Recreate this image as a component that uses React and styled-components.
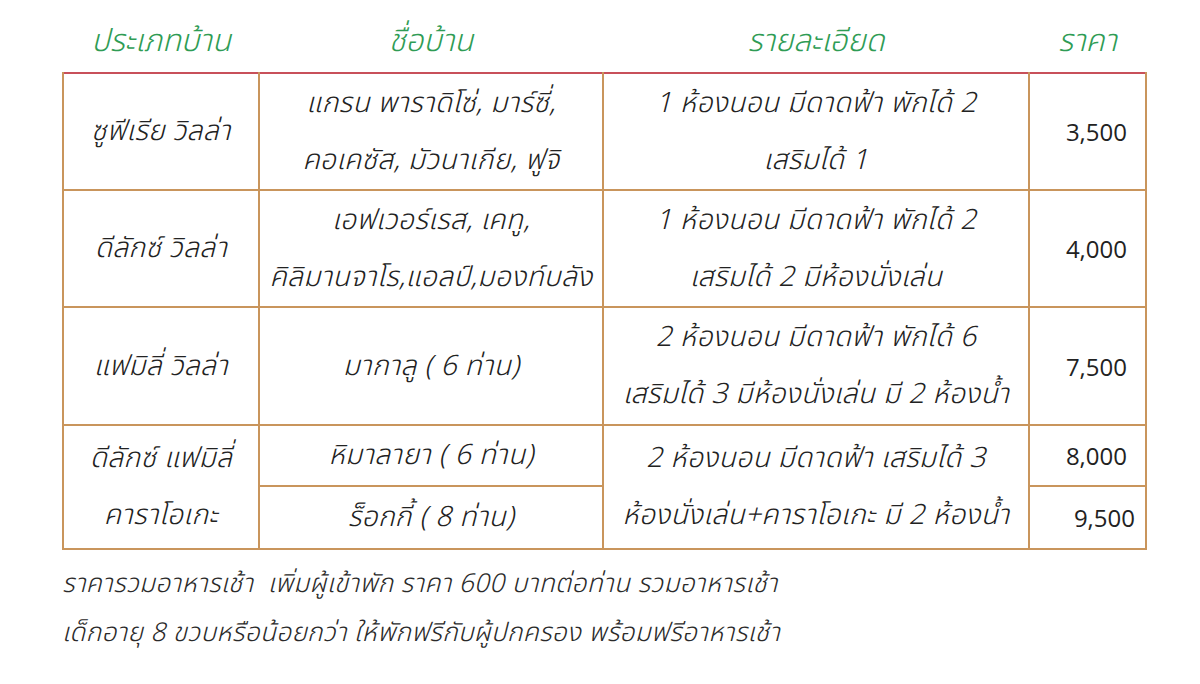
import React from "react";
import styled, { createGlobalStyle } from "styled-components";

const Global = createGlobalStyle`
  html, body {
    margin: 0;
    background: #ffffff;
  }
  body {
    font-family: "Noto Sans Thai", "Noto Sans", "DejaVu Sans", sans-serif;
    color: #222;
  }
`;

const Page = styled.div`
  width: 1200px;
  height: 684px;
  padding: 0 0 0 62px;
  box-sizing: border-box;
  overflow: hidden;
`;

const Table = styled.table`
  border-collapse: collapse;
  width: 1083px;
  table-layout: fixed;
`;

const HeadCell = styled.th`
  height: 62px;
  padding: 0 0 10px;
  vertical-align: bottom;
  font-weight: 300;
  font-style: italic;
  font-size: 31px;
  line-height: 40px;
  color: #2f9c55;
  text-align: center;
  width: ${({ w }) => w}px;
`;

const Cell = styled.td`
  border: 2px solid #c9955c;
  border-top-color: ${({ top }) => (top ? "#c8505a" : "#c9955c")};
  height: ${({ h }) => h}px;
  padding: 0 4px;
  box-sizing: border-box;
  text-align: center;
  vertical-align: middle;
  font-size: 28px;
  letter-spacing: 0.4px;
  font-weight: 300;
  font-style: italic;
  line-height: 57px;
  white-space: nowrap;
`;

const Price = styled(Cell)`
  text-align: right;
  padding-right: ${({ pr }) => pr || 18}px;
  font-family: "Open Sans", "Liberation Sans", sans-serif;
  font-style: normal;
  font-weight: 400;
  font-size: 24px;
  letter-spacing: 0;
  line-height: normal;
`;

const Notes = styled.div`
  margin-top: 10px;
  font-size: 26px;
  letter-spacing: 0.4px;
  font-weight: 300;
  font-style: italic;
  line-height: 49px;
  color: #2a2a2a;
`;

const rows = [
  {
    type: ["ซูฟีเรีย วิลล่า"],
    name: ["แกรน พาราดิโซ่, มาร์ซี่,", "คอเคซัส, มัวนาเกีย, ฟูจิ"],
    detail: ["1 ห้องนอน มีดาดฟ้า พักได้ 2", "เสริมได้ 1"],
    price: "3,500",
    h: 117,
  },
  {
    type: ["ดีลักซ์ วิลล่า"],
    name: ["เอฟเวอร์เรส, เคทู,", "คิลิมานจาโร,แอลป์,มองท์บลัง"],
    detail: ["1 ห้องนอน มีดาดฟ้า พักได้ 2", "เสริมได้ 2 มีห้องนั่งเล่น"],
    price: "4,000",
    h: 117,
  },
  {
    type: ["แฟมิลี่ วิลล่า"],
    name: ["มากาลู ( 6 ท่าน)"],
    detail: ["2 ห้องนอน มีดาดฟ้า พักได้ 6", "เสริมได้ 3 มีห้องนั่งเล่น มี 2 ห้องน้ำ"],
    price: "7,500",
    h: 118,
  },
];

const Lines = ({ items }) =>
  items.map((t, i) => (
    <React.Fragment key={i}>
      {i > 0 && <br />}
      {t}
    </React.Fragment>
  ));

export default function App() {
  return (
    <Page>
      <Global />
      <Table>
        <thead>
          <tr>
            <HeadCell w={196}>ประเภทบ้าน</HeadCell>
            <HeadCell w={344}>ชื่อบ้าน</HeadCell>
            <HeadCell w={426}>รายละเอียด</HeadCell>
            <HeadCell w={117}>ราคา</HeadCell>
          </tr>
        </thead>
        <tbody>
          {rows.map((r, i) => (
            <tr key={i}>
              <Cell h={r.h} top={i === 0}>
                <Lines items={r.type} />
              </Cell>
              <Cell h={r.h} top={i === 0}>
                <Lines items={r.name} />
              </Cell>
              <Cell h={r.h} top={i === 0}>
                <Lines items={r.detail} />
              </Cell>
              <Price h={r.h} top={i === 0}>
                {r.price}
              </Price>
            </tr>
          ))}
          <tr>
            <Cell h={61} rowSpan={2}>
              ดีลักซ์ แฟมิลี่
              <br />
              คาราโอเกะ
            </Cell>
            <Cell h={61}>หิมาลายา ( 6 ท่าน)</Cell>
            <Cell h={61} rowSpan={2}>
              2 ห้องนอน มีดาดฟ้า เสริมได้ 3
              <br />
              ห้องนั่งเล่น+คาราโอเกะ มี 2 ห้องน้ำ
            </Cell>
            <Price h={61}>8,000</Price>
          </tr>
          <tr>
            <Cell h={63}>ร็อกกี้ ( 8 ท่าน)</Cell>
            <Price h={63} pr={10}>
              9,500
            </Price>
          </tr>
        </tbody>
      </Table>
      <Notes>
        ราคารวมอาหารเช้า&nbsp;&nbsp;เพิ่มผู้เข้าพัก ราคา 600 บาทต่อท่าน รวมอาหารเช้า
        <br />
        เด็กอายุ 8 ขวบหรือน้อยกว่า ให้พักฟรีกับผู้ปกครอง พร้อมฟรีอาหารเช้า
      </Notes>
    </Page>
  );
}
